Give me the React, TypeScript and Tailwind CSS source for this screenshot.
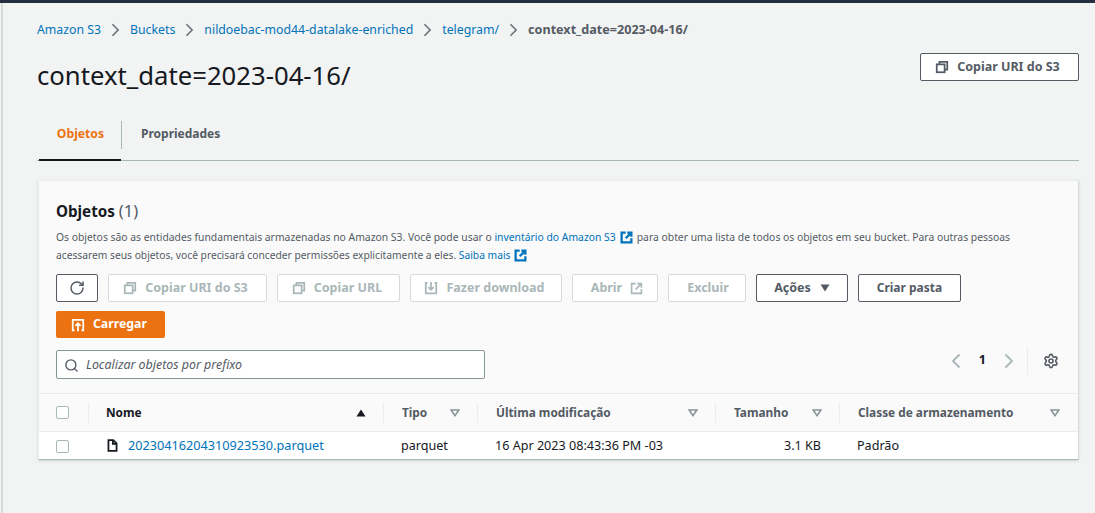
import { RotateCw, Search, Settings } from "lucide-react"
import type { ReactNode } from "react"

function CopyIcon({ className }: { className?: string }) {
  return (
    <svg viewBox="0 0 16 16" fill="none" stroke="currentColor" strokeWidth="2" className={className}>
      <path d="M5 5V2h9v9h-3" />
      <rect x="2" y="5" width="9" height="9" />
    </svg>
  )
}

function ExternalIcon({ className, weight = 2 }: { className?: string; weight?: number }) {
  return (
    <svg viewBox="0 0 16 16" fill="none" stroke="currentColor" strokeWidth={weight} className={className}>
      <path d="M7 2H2v12h12V9" />
      <path d="M9 2h5v5M14 2L7 9" />
    </svg>
  )
}

function DownloadIcon({ className }: { className?: string }) {
  return (
    <svg viewBox="0 0 16 16" fill="none" stroke="currentColor" strokeWidth="2" className={className}>
      <path d="M4 2H2v12h12V2h-2" />
      <path d="M8 1v9M5 7l3 3 3-3" />
    </svg>
  )
}

function UploadIcon({ className }: { className?: string }) {
  return (
    <svg viewBox="0 0 16 16" fill="none" stroke="currentColor" strokeWidth="2" className={className}>
      <path d="M4 14H2V2h12v12h-2" />
      <path d="M8 15V6M5 9l3-3 3 3" />
    </svg>
  )
}

function FileIcon({ className }: { className?: string }) {
  return (
    <svg viewBox="0 0 16 16" fill="none" stroke="currentColor" strokeWidth="2.2" className={className}>
      <path d="M3 1.5h6l4 4V14.5H3z" />
      <path d="M8.5 1.5v4.5H13" />
    </svg>
  )
}

function Chevron({ className, left = false }: { className?: string; left?: boolean }) {
  return (
    <svg viewBox="0 0 10 16" fill="none" stroke="currentColor" strokeWidth="1.8" className={className}>
      <path d={left ? "M8.5 1.5L2 8l6.5 6.5" : "M1.5 1.5L8 8l-6.5 6.5"} />
    </svg>
  )
}

function SortDown() {
  return (
    <svg viewBox="0 0 10 8" className="w-[10px] h-[8px] text-[#879596]" fill="none" stroke="currentColor" strokeWidth="1.6">
      <path d="M1.2 1h7.6L5 6.6z" />
    </svg>
  )
}

function DisabledButton({ children, className }: { children: ReactNode; className: string }) {
  return (
    <div className={`h-[28px] flex items-center justify-center gap-[8px] bg-white border border-[#d5dbdb] rounded-[2px] text-[#aab7b8] font-bold text-[12.5px] ${className}`}>
      {children}
    </div>
  )
}

function NormalButton({ children, className }: { children: ReactNode; className: string }) {
  return (
    <div className={`h-[28px] flex items-center justify-center bg-white border border-[#545b64] rounded-[2px] text-[#545b64] font-bold text-[12.5px] ${className}`}>
      {children}
    </div>
  )
}

function Crumb({ label }: { label: string }) {
  return (
    <>
      <span className="text-[#0073bb]">{label}</span>
      <Chevron className="w-[9px] h-[14px] mx-[10px] text-[#687078]" />
    </>
  )
}

function HeaderCell({ label, width, divider = true, dark = false, icon, inset = "pl-[18px]" }: { label: string; width: string; divider?: boolean; dark?: boolean; icon: ReactNode; inset?: string }) {
  return (
    <div className={`relative h-full flex items-center justify-between pr-[18px] ${inset} ${width}`}>
      <span className={`font-bold text-[11.85px] ${dark ? "text-[#16191f]" : "text-[#545b64]"}`}>{label}</span>
      {icon}
      {divider && <span className="absolute right-0 top-[9px] h-[20px] w-px bg-[#eaeded]" />}
    </div>
  )
}

export default function App() {
  return (
    <div className="w-[1095px] h-[513px] overflow-hidden bg-[#f2f3f3] text-[#16191f]" style={{ fontFamily: '"Noto Sans", sans-serif' }}>
      <div className="h-[3px] bg-[#232f3e]" />
      <div className="flex h-[510px]">
        <div className="w-[2px] ml-px bg-[#d5dbdb]" />
        <div className="w-[1076px] ml-[34px]">
          <div className="flex items-center h-[20px] mt-[17px] text-[12.3px]">
            <Crumb label="Amazon S3" />
            <Crumb label="Buckets" />
            <Crumb label="nildoebac-mod44-datalake-enriched" />
            <Crumb label="telegram/" />
            <span className="font-bold text-[12.6px] text-[#545b64]">context_date=2023-04-16/</span>
          </div>

          <div className="flex items-start justify-between mt-[13px] h-[27px] w-[1042px]">
            <h1 className="mt-[6px] text-[25.7px] leading-[34px] font-normal">context_date=2023-04-16/</h1>
            <NormalButton className="w-[159px] gap-[8px] pr-[4px]">
              <CopyIcon className="w-[14px] h-[14px]" />
              Copiar URI do S3
            </NormalButton>
          </div>

          <div className="mt-[28px] h-[53px] flex border-b border-[#aab7b8] w-[1042px]">
            <div className="w-[82px] ml-[2px] h-[53px] pl-px pt-px border-b-2 border-[#16191f] flex items-center justify-center font-bold text-[12.2px] text-[#ec7211]">
              Objetos
            </div>
            <div className="w-px h-[28px] mt-[13px] bg-[#aab7b8]" />
            <div className="ml-[19px] h-[52px] flex items-center font-bold text-[12px] text-[#545b64]">Propriedades</div>
          </div>

          <div className="mt-[19px] ml-px w-[1041px] h-[280px] bg-[#fafafa] border border-[#eaeded] border-b-[#aab7b8] border-r-[#d5dbdb] shadow-sm">
            <div className="pl-[17px] pt-[19px]">
              <div className="text-[15.2px] leading-[22px] font-bold">
                Objetos <span className="font-normal text-[16.5px] text-[#545b64]">(1)</span>
              </div>
              <p className="mt-[6px] text-[10.36px] leading-[18px] text-[#545b64]">
                Os objetos são as entidades fundamentais armazenadas no Amazon S3. Você pode usar o <span className="text-[#0073bb]">inventário do Amazon S3</span>
                <ExternalIcon weight={2.8} className="inline w-[13px] h-[13px] mx-[4px] text-[#0073bb] align-[-3px]" />
                para obter uma lista de todos os objetos em seu bucket. Para outras pessoas
                <br />
                <span className="text-[10.26px]">
                  acessarem seus objetos, você precisará conceder permissões explicitamente a eles. <span className="text-[#0073bb]">Saiba mais</span>
                </span>
                <ExternalIcon weight={2.8} className="inline w-[13px] h-[13px] ml-[4px] text-[#0073bb] align-[-3px]" />
              </p>

              <div className="mt-[10px] flex gap-[10px]">
                <NormalButton className="w-[42px]">
                  <RotateCw className="w-[16px] h-[16px]" strokeWidth={2.2} />
                </NormalButton>
                <DisabledButton className="w-[159px] pr-[4px]">
                  <CopyIcon className="w-[14px] h-[14px]" />
                  Copiar URI do S3
                </DisabledButton>
                <DisabledButton className="w-[123px] pr-[3px]">
                  <CopyIcon className="w-[14px] h-[14px]" />
                  Copiar URL
                </DisabledButton>
                <DisabledButton className="w-[152px] pr-[3px]">
                  <DownloadIcon className="w-[14px] h-[14px]" />
                  Fazer download
                </DisabledButton>
                <DisabledButton className="w-[86px] pl-[4px]">
                  Abrir
                  <ExternalIcon className="w-[13px] h-[13px]" />
                </DisabledButton>
                <DisabledButton className="w-[78px] pl-[2px]">Excluir</DisabledButton>
                <NormalButton className="w-[92px] gap-[9px]">
                  Ações
                  <svg viewBox="0 0 10 8" className="w-[10px] h-[8px]">
                    <path d="M0.5 0.5h9L5 7.5z" fill="currentColor" />
                  </svg>
                </NormalButton>
                <NormalButton className="w-[103px] text-[12px]">Criar pasta</NormalButton>
              </div>

              <div className="mt-[9px] w-[109px] h-[27px] bg-[#ec7211] rounded-[2px] flex items-center justify-center gap-[8px] pr-[3px] text-white font-bold text-[12.3px]">
                <UploadIcon className="w-[14px] h-[14px]" />
                Carregar
              </div>

              <div className="mt-[12px] flex items-center h-[29px] pr-[18px]">
                <div className="w-[429px] h-[29px] pt-px bg-white border border-[#879596] rounded-[2px] flex items-center pl-[7px] gap-[7px]">
                  <Search className="w-[15px] h-[15px] text-[#545b64]" strokeWidth={2.2} />
                  <span className="italic text-[12.4px] text-[#545b64]">Localizar objetos por prefixo</span>
                </div>
                <div className="ml-auto flex items-center h-[28px] mb-[8px]">
                  <Chevron left className="w-[10px] h-[16px] text-[#aab7b8]" />
                  <span className="mx-[18px] font-bold text-[12.6px]">1</span>
                  <Chevron className="w-[10px] h-[16px] text-[#aab7b8]" />
                  <span className="ml-[13px] w-px h-[28px] bg-[#eaeded]" />
                  <Settings className="ml-[15px] mr-px w-[16px] h-[16px] text-[#545b64]" strokeWidth={2.4} />
                </div>
              </div>
            </div>

            <div className="mt-[14px] h-[39px] flex items-center border-t border-b border-[#eaeded]">
              <div className="relative h-full w-[50px] flex items-center pl-[17px]">
                <span className="w-[13px] h-[13px] bg-white border border-[#aab7b8] rounded-[2px]" />
                <span className="absolute right-0 top-[9px] h-[20px] w-px bg-[#eaeded]" />
              </div>
              <HeaderCell
                label="Nome"
                width="w-[295px]"
                dark
                inset="pl-[17px]"
                icon={
                  <svg viewBox="0 0 10 8" className="w-[10px] h-[8px] text-[#16191f]">
                    <path d="M0.5 7.5h9L5 0.5z" fill="currentColor" />
                  </svg>
                }
              />
              <HeaderCell label="Tipo" width="w-[94px]" icon={<SortDown />} />
              <HeaderCell label="Última modificação" width="w-[238px]" icon={<SortDown />} />
              <HeaderCell label="Tamanho" width="w-[124px]" icon={<SortDown />} />
              <HeaderCell label="Classe de armazenamento" width="w-[238px]" divider={false} icon={<SortDown />} />
            </div>

            <div className="h-[27px] pt-px bg-white flex items-center text-[12.6px] text-[#16191f]">
              <div className="w-[49px] pl-[17px] flex items-center">
                <span className="w-[13px] h-[13px] bg-white border border-[#aab7b8] rounded-[2px]" />
              </div>
              <div className="w-[295px] pl-[18px] flex items-center gap-[9px]">
                <FileIcon className="w-[13px] h-[13px]" />
                <span className="text-[12.7px] text-[#0073bb]">20230416204310923530.parquet</span>
              </div>
              <div className="w-[94px] pl-[18px]">parquet</div>
              <div className="w-[238px] pl-[18px]">16 Apr 2023 08:43:36 PM -03</div>
              <div className="w-[124px] pr-[18px] text-right">3.1 KB</div>
              <div className="pl-[18px]">Padrão</div>
            </div>
          </div>
        </div>
      </div>
    </div>
  )
}
